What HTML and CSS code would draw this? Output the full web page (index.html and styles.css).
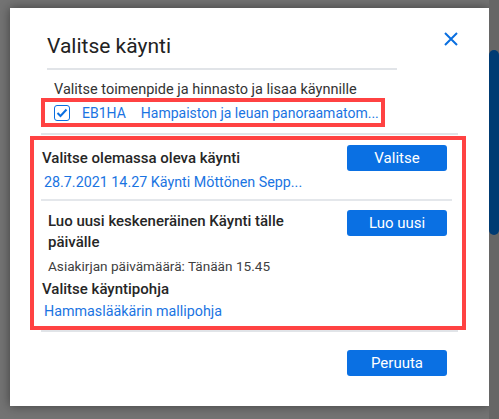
FILE: index.html
```html
<!DOCTYPE html>
<html lang="fi">
<head>
  <meta charset="UTF-8">
  <meta name="viewport" content="width=device-width, initial-scale=1.0">
  <title>Valitse käynti</title>
  <link rel="stylesheet" href="styles.css">
</head>
<body>
  <div class="screen">
    <div class="dialog">
      <div class="dialog-head">
        <h2>Valitse käynti</h2>
        <button class="close" aria-label="Sulje">
          <svg width="14" height="14" viewBox="0 0 14 14"><path d="M1 1L13 13M13 1L1 13" stroke="#0a6fe0" stroke-width="2" fill="none"/></svg>
        </button>
      </div>
      <div class="head-rule"></div>

      <p class="hint">Valitse toimenpide ja hinnasto ja lisaa käynnille</p>
      <div class="marked procedure">
        <span class="check">
          <svg width="12" height="10" viewBox="0 0 12 10"><path d="M1.5 5L4.5 8L10.5 1.5" stroke="#0a6fe0" stroke-width="2" fill="none"/></svg>
        </span>
        <a class="link code">EB1HA</a>
        <a class="link">Hampaiston ja leuan panoraamatom...</a>
      </div>
      <div class="rule"></div>

      <div class="marked visits">
        <div class="visit-row">
          <div class="visit-text">
            <div class="label">Valitse olemassa oleva käynti</div>
            <a class="link">28.7.2021 14.27 Käynti Möttönen Sepp...</a>
          </div>
          <button class="btn">Valitse</button>
        </div>
        <div class="row-rule"></div>
        <div class="visit-row new-visit">
          <div class="visit-text">
            <div class="label">Luo uusi keskeneräinen Käynti tälle päivälle</div>
            <div class="meta">Asiakirjan päivämäärä: Tänään 15.45</div>
          </div>
          <button class="btn">Luo uusi</button>
        </div>
        <div class="label template-label">Valitse käyntipohja</div>
        <a class="link template-link">Hammaslääkärin mallipohja</a>
      </div>
      <div class="rule rule-tight"></div>

      <div class="dialog-foot">
        <button class="btn">Peruuta</button>
      </div>
    </div>
    <div class="scroll">
      <div class="thumb"></div>
    </div>
  </div>
</body>
</html>
```
FILE: styles.css
```css
body {
  margin: 0;
  background: #737373;
  font-family: Roboto, "Noto Sans", sans-serif;
  color: #262626;
  overflow: hidden;
}
.screen {
  display: flex;
  height: 419px;
  padding: 8px 0 0 10px;
  box-sizing: border-box;
}
.dialog {
  width: 479px;
  height: 398px;
  background: #fff;
  box-shadow: 0 0 10px rgba(0, 0, 0, 0.45);
  box-sizing: border-box;
  padding-left: 20px;
}
.dialog-head {
  display: flex;
  justify-content: space-between;
  padding: 18px 31px 0 17px;
  height: 40px;
}
.dialog-head h2 {
  margin: 0;
  font-size: 21px;
  line-height: 40px;
  font-weight: 400;
  color: #222;
}
.close {
  border: none;
  background: none;
  padding: 0;
  margin-top: 6px;
  width: 14px;
  height: 14px;
  cursor: pointer;
}
.head-rule {
  margin: 2px 0 0 17px;
  width: 350px;
  height: 2px;
  background: #e1e4e8;
}
.hint {
  margin: 11px 0 0 24px;
  font-size: 14.5px;
  line-height: 17px;
  color: #333;
}
.link {
  color: #1a74e2;
  text-decoration: none;
  font-size: 14.3px;
  white-space: nowrap;
}
.marked {
  border: 4px solid #ff4242;
}
.procedure {
  display: flex;
  align-items: center;
  width: 344px;
  height: 29px;
  box-sizing: border-box;
  margin-left: 11px;
  padding-left: 9px;
}
.procedure .link {
  font-size: 14px;
}
.check {
  width: 16px;
  height: 16px;
  box-sizing: border-box;
  border: 1.5px solid #0a6fe0;
  border-radius: 3px;
  display: flex;
  align-items: center;
  justify-content: center;
  margin-right: 12px;
}
.code {
  margin-right: 15px;
}
.rule {
  margin: 6px 0 1px 11px;
  width: 417px;
  height: 2px;
  background: #e1e4e8;
}
.rule-tight {
  margin: 0 0 0 11px;
}
.visits {
  width: 436px;
  height: 194px;
  box-sizing: border-box;
  padding: 5px 15px 0 8px;
}
.visit-row {
  display: flex;
  justify-content: space-between;
  align-items: flex-start;
}
.visit-text {
  padding-top: 3px;
}
.label {
  font-size: 15px;
  line-height: 20px;
  font-weight: 500;
  color: #262626;
}
.visit-text .link {
  display: block;
  margin: 5px 0 0 2px;
  line-height: 18px;
}
.btn {
  width: 100px;
  height: 26px;
  border: none;
  border-radius: 3px;
  background: #0a70e3;
  color: #fff;
  font-family: inherit;
  font-size: 15px;
  cursor: pointer;
}
.row-rule {
  margin: 8px -5px 0 -1px;
  height: 2px;
  background: #e4e7eb;
}
.new-visit {
  margin-top: 9px;
}
.new-visit .visit-text {
  width: 250px;
  padding: 1px 0 0 6px;
}
.new-visit .label {
  line-height: 21px;
}
.meta {
  font-size: 13.6px;
  line-height: 18px;
  color: #404040;
  margin-top: 4px;
}
.template-label {
  margin-top: 4px;
  line-height: 21px;
}
.template-link {
  display: block;
  margin: 2px 0 0 2px;
  line-height: 18px;
}
.dialog-foot {
  display: flex;
  justify-content: flex-end;
  padding: 18px 42px 0 0;
}
.scroll {
  width: 10px;
  background: #666;
  margin-top: -8px;
}
.thumb {
  margin-top: 50px;
  height: 185px;
  background: #003b73;
  border-radius: 5px;
}
```
